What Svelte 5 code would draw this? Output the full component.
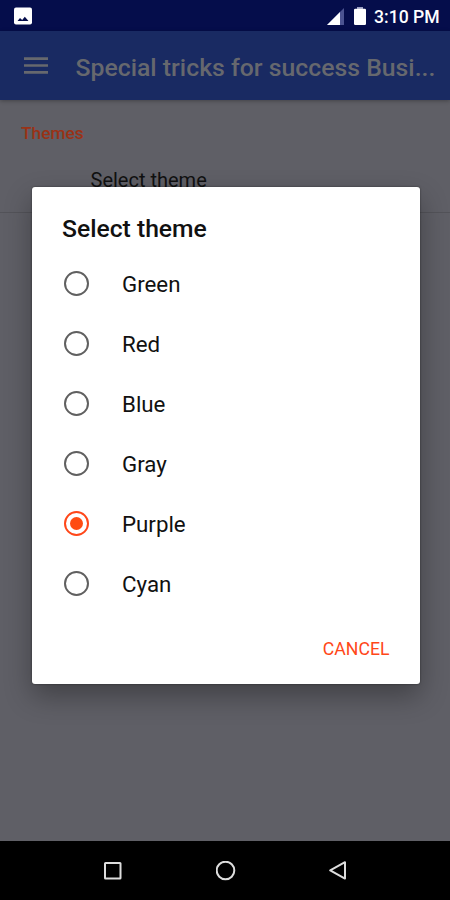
<script lang="ts">
  const themes = ['Green', 'Red', 'Blue', 'Gray', 'Purple', 'Cyan'];
  let selected = $state('Purple');
</script>

<div class="screen">
  <header class="status">
    <svg class="photo" width="18" height="18" viewBox="0 0 18 18">
      <rect y=".5" width="18" height="17" rx="2" fill="#fff" />
      <path d="M3.5 14l2.5-3 2.2 2 2.6-3.2 3.7 4.2z" fill="#050d4b" />
    </svg>
    <svg class="signal" width="17" height="17" viewBox="0 0 17 17">
      <path d="M0 17L17 0v17z" fill="#4b5391" />
      <path d="M0 17L13 4v13z" fill="#fff" />
    </svg>
    <svg class="battery" width="12" height="18" viewBox="0 0 12 18">
      <path d="M3 0h6v2H3z" fill="#9ca0c3" />
      <rect y="1.7" width="12" height="16.3" rx="1.2" fill="#fff" />
    </svg>
    <span class="clock">3:10 PM</span>
  </header>

  <div class="toolbar">
    <button class="menu" aria-label="Menu">
      <svg width="24" height="17" viewBox="0 0 24 17">
        <path d="M0 1.6h24M0 8.5h24M0 15.4h24" stroke="#66686e" stroke-width="2.6" />
      </svg>
    </button>
    <h1>Special tricks for success Busi...</h1>
  </div>

  <main>
    <div class="category">Themes</div>
    <div class="preference">Select theme</div>

    <div class="dialog" role="dialog" aria-label="Select theme">
      <h2>Select theme</h2>
      <div class="options">
        {#each themes as theme}
          <button class="option" onclick={() => (selected = theme)}>
            <span class="radio" class:on={selected === theme}></span>
            <span>{theme}</span>
          </button>
        {/each}
      </div>
      <div class="actions">
        <button class="cancel">CANCEL</button>
      </div>
    </div>
  </main>

  <nav>
    <svg width="20" height="20" viewBox="0 0 20 20">
      <rect x="2" y="2" width="15.5" height="15.5" rx=".5" />
    </svg>
    <svg width="20" height="20" viewBox="0 0 20 20">
      <circle cx="9.5" cy="9.5" r="8.8" />
    </svg>
    <svg width="20" height="20" viewBox="0 0 20 20">
      <path d="M17 1.2v16.4L2.2 9.4z" />
    </svg>
  </nav>
</div>

<style>
  :global(body) { margin: 0; background: #000; }
  .screen {
    width: 450px; height: 900px; overflow: hidden;
    display: flex; flex-direction: column;
    font-family: Roboto, sans-serif; color: #111;
  }
  button { font-family: inherit; color: inherit; background: none; border: none; padding: 0; cursor: pointer; }
  svg { display: block; flex-shrink: 0; }

  .status {
    height: 31px; box-sizing: border-box; flex-shrink: 0;
    display: flex; align-items: center; padding: 1px 9px 0 14px;
    background: #050d4b; color: #fff;
  }
  .signal { margin-left: auto; }
  .battery { margin: 0 8px 0 10px; }
  .clock { font-size: 17.6px; font-weight: 500; line-height: 20px; padding-top: 1px; width: 67px; white-space: nowrap; }

  .toolbar {
    height: 69px; flex-shrink: 0; box-sizing: border-box; padding-left: 24px;
    display: flex; align-items: center; background: #192a62;
    position: relative; z-index: 1; box-shadow: 0 1px 4px rgba(0, 0, 0, .3);
  }
  .menu { margin-right: 27.5px; }
  h1 { margin: 5px 0 0; font-size: 24.8px; line-height: 30px; font-weight: 500; color: #66686e; white-space: nowrap; }

  main { height: 741px; flex-shrink: 0; background: #5f5f66; overflow: hidden; }
  .category { padding: 22px 21px 0; font-size: 17.3px; line-height: 22px; font-weight: 500; color: #9a3216; }
  .preference {
    height: 69px; box-sizing: border-box; padding: 23px 0 0 90.5px;
    border-bottom: 1px solid #535359; font-size: 20px; line-height: 26px;
  }
  .dialog {
    position: relative; width: 387.5px; height: 497px; box-sizing: border-box;
    margin: -26px 0 0 32px; padding-top: 27px;
    display: flex; flex-direction: column;
    background: #fff; border-radius: 3px;
    box-shadow: 0 0 2px rgba(0, 0, 0, .5), 0 12px 28px rgba(0, 0, 0, .32);
  }
  h2 { margin: 0; padding-left: 30px; font-size: 24.7px; line-height: 30px; font-weight: 500; }
  .options { display: flex; flex-direction: column; padding-top: 9px; }
  .option { height: 60px; display: flex; align-items: center; padding-left: 32px; font-size: 22.3px; line-height: 28px; }
  .option > span:last-child { margin-top: 1px; }
  .radio {
    width: 25px; height: 25px; box-sizing: border-box; margin-right: 33px;
    display: grid; place-items: center; border: 2px solid #606060; border-radius: 50%;
  }
  .radio.on { border-color: #ff4719; }
  .radio.on::after { content: ''; width: 13px; height: 13px; border-radius: 50%; background: #ff4c12; }
  .actions { display: flex; justify-content: flex-end; padding: 25px 30px 0 0; }
  .cancel { font-size: 17.7px; line-height: 22px; color: #ff4719; }

  nav {
    flex: 1; box-sizing: border-box; padding: 0 102px 0 103px;
    display: flex; align-items: center; justify-content: space-between; background: #000;
  }
  nav svg { fill: none; stroke: #ddd; stroke-width: 2; stroke-linejoin: round; }
</style>
